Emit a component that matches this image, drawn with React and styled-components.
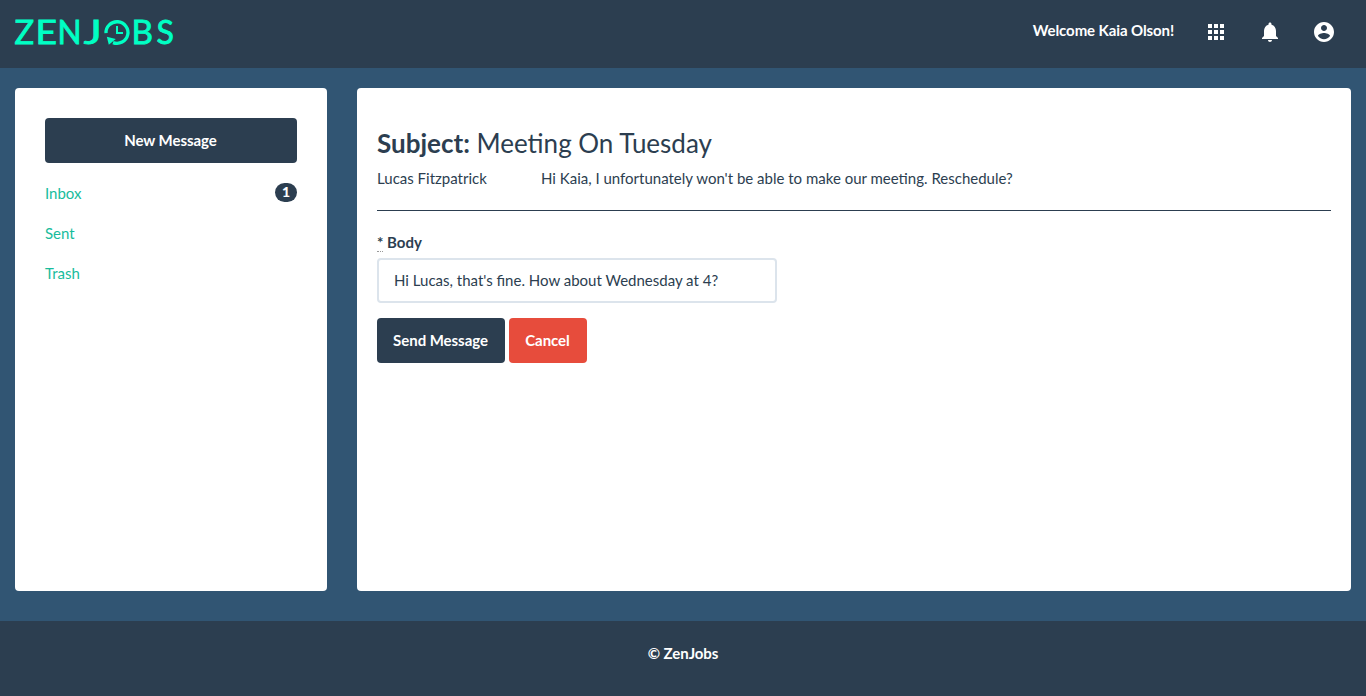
import React from 'react';
import styled, { createGlobalStyle } from 'styled-components';

const navy = '#2c3e50';

const GlobalStyle = createGlobalStyle`
  *, *::before, *::after { box-sizing: border-box; }
  body {
    margin: 0;
    background: #315573;
    color: ${navy};
    font-family: Lato, "Liberation Sans", sans-serif;
    font-size: 15px;
    line-height: 21px;
  }
`;

const Page = styled.div`
  display: flex;
  flex-direction: column;
  height: 696px;
  overflow: hidden;
`;

const Header = styled.header`
  display: flex;
  align-items: center;
  justify-content: space-between;
  flex: none;
  height: 68px;
  padding: 0 30px 0 10px;
  background: ${navy};
`;

const LogoSvg = styled.svg`
  display: block;
  width: 172px;
  height: 68px;
`;

const LogoLetter = styled.text`
  fill: #00ffc4;
  stroke: #00ffc4;
  stroke-width: 0.8px;
  font-family: Lato, sans-serif;
  font-size: 32px;
`;

const Nav = styled.nav`
  display: flex;
  align-items: center;
  gap: 30px;
  margin-top: -4px;
`;

const Welcome = styled.span`
  margin-top: -3px;
  color: #fff;
  font-weight: 700;
  letter-spacing: -0.1px;
`;

const NavIcon = styled.svg`
  display: block;
  width: 24px;
  height: 24px;
  fill: #fff;
`;

const Main = styled.main`
  display: grid;
  grid-template-columns: 312px 994px;
  gap: 30px;
  height: 553px;
  padding: 20px 15px 30px;
`;

const Panel = styled.section`
  padding: ${p => p.$pad};
  background: #fff;
  border-radius: 4px;
`;

const Button = styled.button`
  width: ${p => p.$width || '100%'};
  height: 45px;
  padding: 0 1px 0 0;
  border: 0;
  border-radius: 4px;
  background: ${p => (p.$danger ? '#e74c3c' : navy)};
  color: #fff;
  font: inherit;
  font-weight: 700;
  letter-spacing: -0.05px;
`;

const FolderList = styled.ul`
  display: flex;
  flex-direction: column;
  gap: 19px;
  margin: 20px 0 0;
  padding: 0;
  list-style: none;
`;

const Folder = styled.li`
  display: flex;
  justify-content: space-between;
  align-items: flex-start;
  height: 21px;
`;

const FolderLink = styled.a`
  color: #18bc9c;
`;

const Badge = styled.span`
  width: 22px;
  height: 19px;
  border-radius: 10px;
  background: ${navy};
  color: #fff;
  font-size: 14px;
  font-weight: 900;
  line-height: 18px;
  text-align: center;
`;

const Subject = styled.h3`
  margin: 0;
  font-size: 26px;
  font-weight: 400;
  line-height: 29px;
`;

const Thread = styled.div`
  display: grid;
  grid-template-columns: 164px 1fr;
  margin-top: 10px;
  padding-bottom: 21px;
  border-bottom: 1px solid ${navy};
`;

const Form = styled.form`
  margin-top: 21px;
`;

const Label = styled.label`
  display: block;
  font-weight: 700;
`;

const Required = styled.abbr`
  display: inline-block;
  height: 20px;
  border-bottom: 1px dotted #999;
  text-decoration: none;
`;

const Field = styled.input`
  display: block;
  width: 400px;
  height: 45px;
  margin-top: 5px;
  padding: 0 15px 2px;
  border: 2px solid #dce4ec;
  border-radius: 4px;
  color: ${navy};
  font: inherit;
  outline: 0;
`;

const Actions = styled.div`
  display: flex;
  gap: 4px;
  margin-top: 15px;
`;

const Footer = styled.footer`
  flex: 1;
  padding-top: 22px;
  background: ${navy};
  color: #fff;
  font-weight: 700;
  letter-spacing: -0.05px;
  text-align: center;
`;

const logoLetters = [
  { char: 'Z', x: 14.4, width: 19.6 },
  { char: 'E', x: 35.4, width: 21.5 },
  { char: 'N', x: 57.4, width: 24 },
  { char: 'J', x: 83.8, width: 18 },
  { char: 'B', x: 131.6, width: 21.5 },
  { char: 'S', x: 156.6, width: 17.4 },
];

function Logo() {
  return (
    <LogoSvg viewBox="10 0 172 68" role="img" aria-label="ZenJobs">
      {logoLetters.map(({ char, x, width }) => (
        <LogoLetter key={char} x={x} y="44" textLength={width} lengthAdjust="spacingAndGlyphs">
          {char}
        </LogoLetter>
      ))}
      <path d="M106 33.2A11 10.8 0 1 1 113 42.6" fill="none" stroke="#00ffc4" strokeWidth="3.3" />
      <path d="M106.8 36.8l9 2.2-7 5.8z" fill="#00ffc4" />
      <path d="M117 26v7h6" fill="none" stroke="#00ffc4" strokeWidth="2" />
    </LogoSvg>
  );
}

export default function App() {
  return (
    <Page>
      <GlobalStyle />
      <Header>
        <Logo />
        <Nav>
          <Welcome>Welcome Kaia Olson!</Welcome>
          <NavIcon viewBox="0 0 24 24">
            <path d="M4 8h4V4H4v4zm6 12h4v-4h-4v4zm-6 0h4v-4H4v4zm0-6h4v-4H4v4zm6 0h4v-4h-4v4zm6-10v4h4V4h-4zm-6 4h4V4h-4v4zm6 6h4v-4h-4v4zm0 6h4v-4h-4v4z" />
          </NavIcon>
          <NavIcon viewBox="0 0 24 24">
            <path d="M12 22c1.1 0 2-.9 2-2h-4c0 1.1.89 2 2 2zm6-6v-5c0-3.07-1.64-5.64-4.5-6.32V4c0-.83-.67-1.5-1.5-1.5s-1.5.67-1.5 1.5v.68C7.63 5.36 6 7.92 6 11v5l-2 2v1h16v-1l-2-2z" />
          </NavIcon>
          <NavIcon viewBox="0 0 24 24">
            <path d="M12 2C6.48 2 2 6.48 2 12s4.48 10 10 10 10-4.48 10-10S17.52 2 12 2zm0 3c1.66 0 3 1.34 3 3s-1.34 3-3 3-3-1.34-3-3 1.34-3 3-3zm0 14.2c-2.5 0-4.71-1.28-6-3.22.03-1.99 4-3.08 6-3.08 1.99 0 5.97 1.09 6 3.08-1.29 1.94-3.5 3.22-6 3.22z" />
          </NavIcon>
        </Nav>
      </Header>
      <Main>
        <Panel $pad="30px">
          <Button type="button">New Message</Button>
          <FolderList>
            <Folder>
              <FolderLink>Inbox</FolderLink>
              <Badge>1</Badge>
            </Folder>
            <Folder><FolderLink>Sent</FolderLink></Folder>
            <Folder><FolderLink>Trash</FolderLink></Folder>
          </FolderList>
        </Panel>
        <Panel $pad="41px 20px 20px">
          <Subject><b>Subject:</b> Meeting On Tuesday</Subject>
          <Thread>
            <span>Lucas Fitzpatrick</span>
            <span>Hi Kaia, I unfortunately won't be able to make our meeting. Reschedule?</span>
          </Thread>
          <Form>
            <Label htmlFor="body"><Required title="required">*</Required> Body</Label>
            <Field id="body" defaultValue="Hi Lucas, that's fine. How about Wednesday at 4?" />
            <Actions>
              <Button type="button" $width="128px">Send Message</Button>
              <Button type="button" $width="78px" $danger>Cancel</Button>
            </Actions>
          </Form>
        </Panel>
      </Main>
      <Footer>© ZenJobs</Footer>
    </Page>
  );
}
